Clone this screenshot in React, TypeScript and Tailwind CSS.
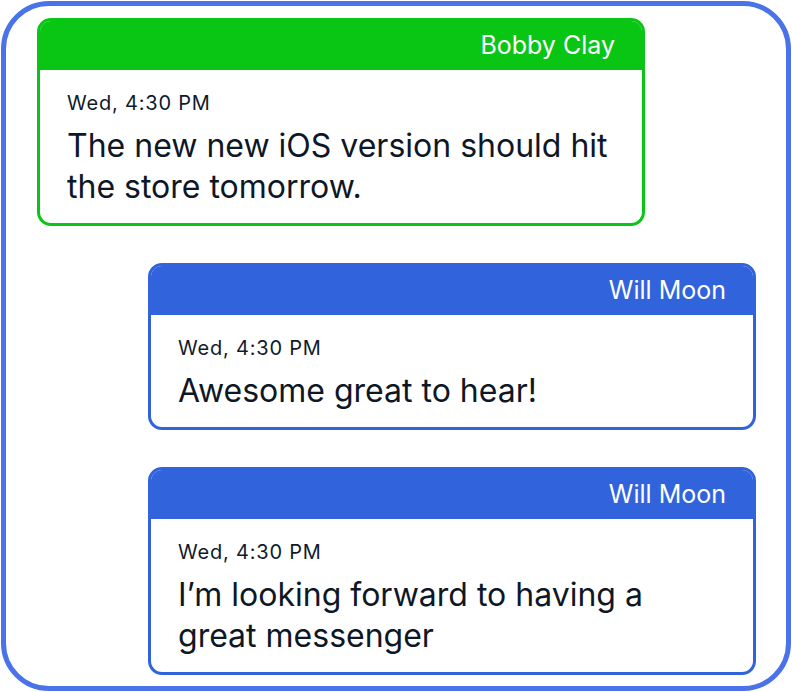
import React from "react";

type Msg = {
  name: string;
  time: string;
  text: string;
  mine: boolean;
};

const messages: Msg[] = [
  { name: "Bobby Clay", time: "Wed, 4:30 PM", text: "The new new iOS version should hit the store tomorrow.", mine: false },
  { name: "Will Moon", time: "Wed, 4:30 PM", text: "Awesome great to hear!", mine: true },
  { name: "Will Moon", time: "Wed, 4:30 PM", text: "I\u2019m looking forward to having a great messenger", mine: true },
];

function Bubble({ msg }: { msg: Msg }) {
  const border = msg.mine ? "border-[#3163dd] self-end" : "border-[#09c615] self-start";
  const head = msg.mine ? "bg-[#3163dd]" : "bg-[#09c615]";
  return (
    <div className={`w-[608px] border-[3px] rounded-[14px] overflow-hidden bg-white ${border}`}>
      <div className={`h-[49px] flex items-center justify-end pr-[27px] text-[25px] text-white ${head}`}>
        {msg.name}
      </div>
      <div className="pl-[27px] pr-[28px] pt-[21px] pb-[16px]">
        <div className="text-[20px] leading-[24px] tracking-[0.04em] text-[#111a2b]">{msg.time}</div>
        <div className="mt-[10px] text-[32px] leading-[41px] text-[#0e1726]">{msg.text}</div>
      </div>
    </div>
  );
}

export default function App() {
  return (
    <div className="w-[792px] h-[692px] bg-white p-[1px]" style={{ fontFamily: "Inter, 'Noto Sans', sans-serif" }}>
      <div className="h-[690px] w-[790px] border-[5px] border-[#4a72e9] rounded-[48px] flex flex-col pt-[12px] pl-[31px] pr-[30px] gap-[37px]">
        {messages.map((m, i) => (
          <Bubble key={i} msg={m} />
        ))}
      </div>
    </div>
  );
}
